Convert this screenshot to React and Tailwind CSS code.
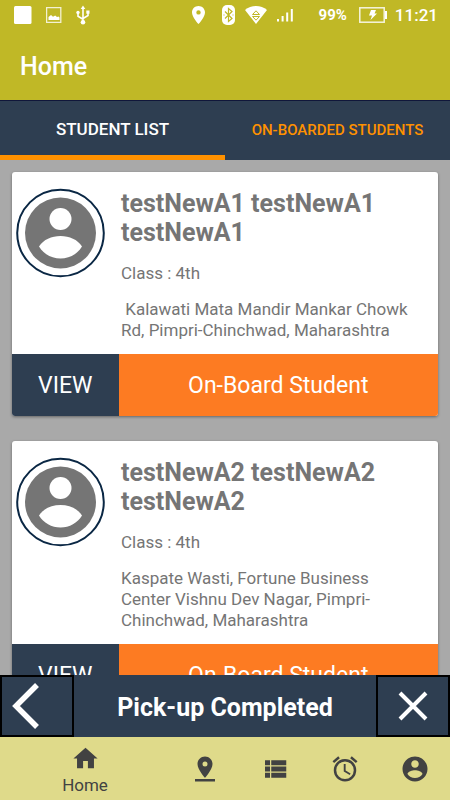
import React, { useState } from "react";

const students = [
  {
    id: 1,
    name: "testNewA1 testNewA1 testNewA1",
    className: "4th",
    address: "\u00a0Kalawati Mata Mandir Mankar Chowk Rd, Pimpri-Chinchwad, Maharashtra",
  },
  {
    id: 2,
    name: "testNewA2 testNewA2 testNewA2",
    className: "4th",
    address: "Kaspate Wasti, Fortune Business Center Vishnu Dev Nagar, Pimpri-Chinchwad, Maharashtra",
  },
];

const navLinks = [
  {
    label: "Stops",
    path: "M18 8c0-3.31-2.69-6-6-6S6 4.69 6 8c0 4.5 6 11 6 11s6-6.500 6-11zm-8 0a2 2 0 1 1 4 0 2 2 0 0 1-4 0zM4 20v2h16v-2H4z",
  },
  {
    label: "List",
    path: "M4 14h4v-4H4v4zm0 5h4v-4H4v4zM4 9h4V5H4v4zm5 5h12v-4H9v4zm0 5h12v-4H9v4zM9 5v4h12V5H9z",
  },
  {
    label: "Alarm",
    path: "M22 5.720l-4.600-3.860-1.290 1.530 4.600 3.860L22 5.720zM7.880 3.390L6.600 1.860 2 5.710l1.290 1.530 4.590-3.850zM12.500 8H11v6l4.750 2.850.750-1.230-4-2.370V8zM12 4c-4.970 0-9 4.030-9 9s4.020 9 9 9a9 9 0 0 0 0-18zm0 16a7 7 0 1 1 0-14 7 7 0 0 1 0 14z",
  },
  {
    label: "Account",
    path: "M12 2C6.480 2 2 6.480 2 12s4.480 10 10 10 10-4.480 10-10S17.520 2 12 2zm0 3c1.660 0 3 1.340 3 3s-1.340 3-3 3-3-1.340-3-3 1.340-3 3-3zm0 14.200c-2.500 0-4.710-1.280-6-3.220.030-1.990 4-3.080 6-3.080 1.990 0 5.970 1.090 6 3.080-1.290 1.940-3.500 3.220-6 3.220z",
  },
];

const Icon = ({ path, className }) => (
  <svg viewBox="0 0 24 24" fill="currentColor" className={className} aria-hidden="true">
    <path d={path} />
  </svg>
);

const StatusBar = () => (
  <div className="flex h-[30px] items-center justify-between pr-3 pl-3.5 text-white">
    <div className="flex items-center gap-3.5">
      <svg viewBox="0 0 18 18" className="size-[18px]" aria-hidden="true">
        <rect x="0" y="0" width="17.500" height="18" rx="1.500" fill="#fff" />
      </svg>
      <svg viewBox="0 0 16 16" className="size-4" aria-hidden="true">
        <rect x=".6" y=".6" width="14.200" height="14.800" fill="none" stroke="#fff" strokeOpacity=".8" strokeWidth="1.300" />
        <path d="M2.500 13V10l2.500-2 2 1.800 2.200-1.300 1.800 1.500 1.500-.5 1 1V13z" fill="#fff" />
      </svg>
      <svg viewBox="0 0 14 20" className="h-5 w-3.5" fill="none" stroke="#fff" strokeWidth="1.600" aria-hidden="true">
        <path d="M7 17V3M2 8v3.200l5 3M12 7.500v3l-5 3" />
        <path d="M7 .5 9.300 4H4.700z" fill="#fff" stroke="none" />
        <circle cx="7" cy="17.300" r="2.300" fill="#fff" stroke="none" />
        <circle cx="2" cy="7.500" r="1.700" fill="#fff" stroke="none" />
        <path d="M10.300 5.500h3.200v3.200h-3.200z" fill="#fff" stroke="none" />
      </svg>
    </div>
    <div className="flex items-center">
      <svg viewBox="0 0 13 18" className="mr-[17px] h-[18px] w-[13px]" aria-hidden="true">
        <path fillRule="evenodd" fill="#fff" d="M6.500 0C2.900 0 0 2.800 0 6.400 0 11 6.500 18 6.500 18S13 11 13 6.400C13 2.800 10.100 0 6.500 0zm0 4.200a2.200 2.200 0 1 1 0 4.400 2.200 2.200 0 0 1 0-4.400z" />
      </svg>
      <svg viewBox="0 0 13 20" className="mr-2.5 h-5 w-[13px]" aria-hidden="true">
        <rect x="0" y="0" width="13" height="20" rx="5" fill="#fff" />
        <path d="M3 6.500l7 7-3.500 3V3.500l3.500 3-7 7M1.500 10h1M10.500 10h1" fill="none" stroke="#c0b826" strokeWidth="1.200" />
      </svg>
      <svg viewBox="0 0 22 18" className="mr-2.5 h-[18px] w-[22px]" aria-hidden="true">
        <path d="M0 4C6-1.300 16-1.300 22 4L11 18z" fill="#fff" />
        <path d="M7.500 8.500 11 4.800l3.500 3.700zM7.500 10.500 11 14.200l3.500-3.700z" fill="none" stroke="#c0b826" strokeWidth="1" />
      </svg>
      <svg viewBox="0 0 16 14" className="mr-[26px] h-3.5 w-4" fill="#fff" aria-hidden="true">
        <path d="M0 11h2v2.500H0zM4.600 8h2v5.500h-2zM9.200 4.500h2v9h-2zM13.800 1h2v12.500h-2z" />
      </svg>
      <span className="mr-3 text-[15px] leading-5 font-bold">99%</span>
      <svg viewBox="0 0 28 16" className="mr-2 h-4 w-7" aria-hidden="true">
        <rect x=".8" y=".8" width="24.400" height="14.400" fill="none" stroke="#fff" strokeOpacity=".85" strokeWidth="1.500" />
        <path d="M26 4h2v8h-2z" fill="#fff" />
        <path d="M12 3h5l-1.500 3.500H18L11.500 13l1.500-4.500h-3z" fill="#fff" />
      </svg>
      <span className="text-[17px] leading-5 font-medium">11:21</span>
    </div>
  </div>
);

const Avatar = () => (
  <svg viewBox="0 0 90 90" className="size-[90px] shrink-0" aria-hidden="true">
    <circle cx="44.500" cy="45" r="43.300" fill="#fff" stroke="#0a2744" strokeWidth="2" />
    <circle cx="44.500" cy="45" r="35.500" fill="#757575" />
    <circle cx="44.500" cy="31" r="11" fill="#fff" />
    <path d="M23 58.500C27.500 51.500 35.500 48 44.500 48s17 3.500 21.500 10.500C61.500 66 53.500 70.500 44.500 70.500S27.500 66 23 58.500z" fill="#fff" />
  </svg>
);

const StudentCard = ({ student }) => (
  <article className="shrink-0 overflow-hidden rounded-[3px] bg-white shadow-[0_1px_3px_rgba(0,0,0,0.4)]">
    <div className="flex gap-[15px] pr-4 pb-[13px] pl-1">
      <div className="pt-4">
        <Avatar />
      </div>
      <div className="min-w-0 pt-[17px] text-[#757575]">
        <h2 className="text-[25px] leading-[29px] font-bold">{student.name}</h2>
        <p className="mt-4 text-[17px] leading-5">Class : {student.className}</p>
        <p className="mt-4 text-[17px] leading-[21px]">{student.address}</p>
      </div>
    </div>
    <div className="flex h-[62px] text-[23px] text-white">
      <button type="button" className="w-1/4 bg-[#2e3e51] pt-0.5">
        VIEW
      </button>
      <button type="button" className="flex-1 bg-[#fd7b22] pt-0.5">
        On-Board Student
      </button>
    </div>
  </article>
);

const App = () => {
  const [activeTab, setActiveTab] = useState("list");

  return (
    <div className="flex h-screen flex-col bg-[#a9a9a9] font-[Roboto,sans-serif]">
      <header className="shrink-0 bg-[#c0b826]">
        <StatusBar />
        <div className="flex h-[70px] items-center px-5 pt-1">
          <h1 className="text-[25px] leading-8 font-medium text-white">Home</h1>
        </div>
      </header>

      <div role="tablist" className="flex h-[60px] shrink-0 border-t border-[#10163a] bg-[#2e3e51]">
        <button
          type="button"
          role="tab"
          aria-selected={activeTab === "list"}
          onClick={() => setActiveTab("list")}
          className={`flex-1 border-b-[5px] pt-1 text-[17px] font-medium ${
            activeTab === "list" ? "border-[#ff9100] text-white" : "border-transparent text-[#ff9100]"
          }`}
        >
          STUDENT LIST
        </button>
        <button
          type="button"
          role="tab"
          aria-selected={activeTab === "onboarded"}
          onClick={() => setActiveTab("onboarded")}
          className={`flex-1 border-b-[5px] pt-1 text-[15px] font-medium ${
            activeTab === "onboarded" ? "border-[#ff9100] text-white" : "border-transparent text-[#ff9100]"
          }`}
        >
          ON-BOARDED STUDENTS
        </button>
      </div>

      <main className="flex min-h-0 flex-1 flex-col gap-[25px] overflow-hidden px-3 pt-3">
        {students.map((student) => (
          <StudentCard key={student.id} student={student} />
        ))}
      </main>

      <div className="flex h-[62px] shrink-0 bg-[#2e3e51] text-white">
        <button type="button" aria-label="Previous" className="w-[74px] border-2 border-black pl-2.5">
          <svg viewBox="0 0 28 48" className="h-12 w-7" aria-hidden="true">
            <path d="M25 3 4 24l21 21" fill="none" stroke="#fff" strokeWidth="5.500" />
          </svg>
        </button>
        <p className="flex flex-1 items-center justify-center pt-1 text-[25px] leading-8 font-bold">Pick-up Completed</p>
        <button type="button" aria-label="Close" className="flex w-[74px] items-center justify-center border-2 border-black">
          <svg viewBox="0 0 30 30" className="size-[30px]" aria-hidden="true">
            <path d="M2 2l26 26M28 2 2 28" fill="none" stroke="#fff" strokeWidth="4" />
          </svg>
        </button>
      </div>

      <nav className="flex h-[63px] shrink-0 bg-[#dfda8a] text-[#424242]">
        <a href="#home" className="flex flex-[17] flex-col items-center pt-[7px]">
          <Icon path="M10 20v-6h4v6h5v-8h3L12 3 2 12h3v8z" className="size-[29px]" />
          <span className="text-[17px] leading-6">Home</span>
        </a>
        {navLinks.map((link) => (
          <a
            key={link.label}
            href={`#${link.label.toLowerCase()}`}
            aria-label={link.label}
            className="flex flex-[7] items-center justify-center"
          >
            <Icon path={link.path} className="size-[30px]" />
          </a>
        ))}
      </nav>
    </div>
  );
};

export default App;
